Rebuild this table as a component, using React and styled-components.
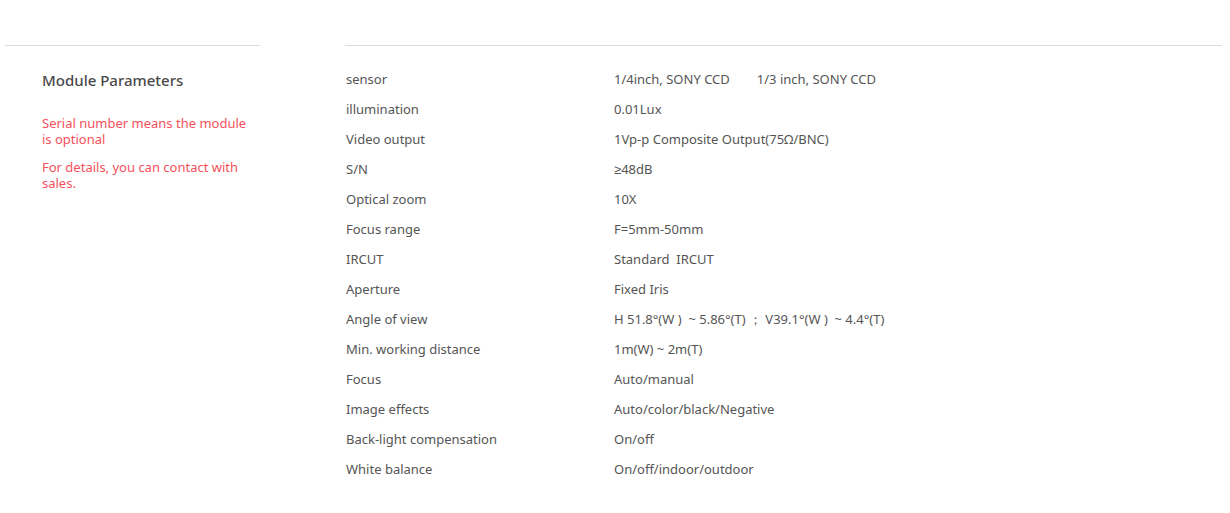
import React from "react";
import styled, { createGlobalStyle } from "styled-components";

const Global = createGlobalStyle`
  html, body { margin: 0; padding: 0; background: #fff; }
  body { font-family: "Segoe UI", "Noto Sans", sans-serif; }
`;

const Page = styled.div`
  display: flex;
  width: 1230px;
  height: 513px;
  padding: 45px 8px 0 5px;
  box-sizing: border-box;
  gap: 85px;
`;

const Side = styled.aside`
  width: 255px;
  flex: none;
  border-top: 1px solid #dcdcdc;
  padding: 23px 0 0 37px;
  box-sizing: border-box;
`;

const Title = styled.h2`
  margin: 0 0 24px;
  font-size: 15px;
  line-height: 22px;
  font-weight: 500;
  color: #4a4a4a;
`;

const Note = styled.p`
  margin: 0 0 12px;
  font-size: 13px;
  line-height: 16px;
  color: #f4515b;
  max-width: 210px;
`;

const Main = styled.main`
  flex: 1;
  border-top: 1px solid #dcdcdc;
  padding-top: 18px;
`;

const Row = styled.div`
  display: grid;
  grid-template-columns: 268px 1fr;
  padding-left: 1px;
  height: 30px;
  font-size: 13px;
  line-height: 30px;
  color: #555;
`;

const Cell = styled.span`
  white-space: pre;
`;

const rows = [
  ["sensor", "1/4inch, SONY CCD        1/3 inch, SONY CCD"],
  ["illumination", "0.01Lux"],
  ["Video output", "1Vp-p Composite Output(75Ω/BNC)"],
  ["S/N", "≥48dB"],
  ["Optical zoom", "10X"],
  ["Focus range", "F=5mm-50mm"],
  ["IRCUT", "Standard  IRCUT"],
  ["Aperture", "Fixed Iris"],
  ["Angle of view", "H 51.8°(W )  ~ 5.86°(T) ； V39.1°(W )  ~ 4.4°(T)"],
  ["Min. working distance", "1m(W) ~ 2m(T)"],
  ["Focus", "Auto/manual"],
  ["Image effects", "Auto/color/black/Negative"],
  ["Back-light compensation", "On/off"],
  ["White balance", "On/off/indoor/outdoor"],
];

export default function App() {
  return (
    <>
      <Global />
      <Page>
        <Side>
          <Title>Module Parameters</Title>
          <Note>Serial number means the module is optional</Note>
          <Note>For details, you can contact with sales.</Note>
        </Side>
        <Main>
          {rows.map(([k, v]) => (
            <Row key={k}>
              <Cell>{k}</Cell>
              <Cell>{v}</Cell>
            </Row>
          ))}
        </Main>
      </Page>
    </>
  );
}
